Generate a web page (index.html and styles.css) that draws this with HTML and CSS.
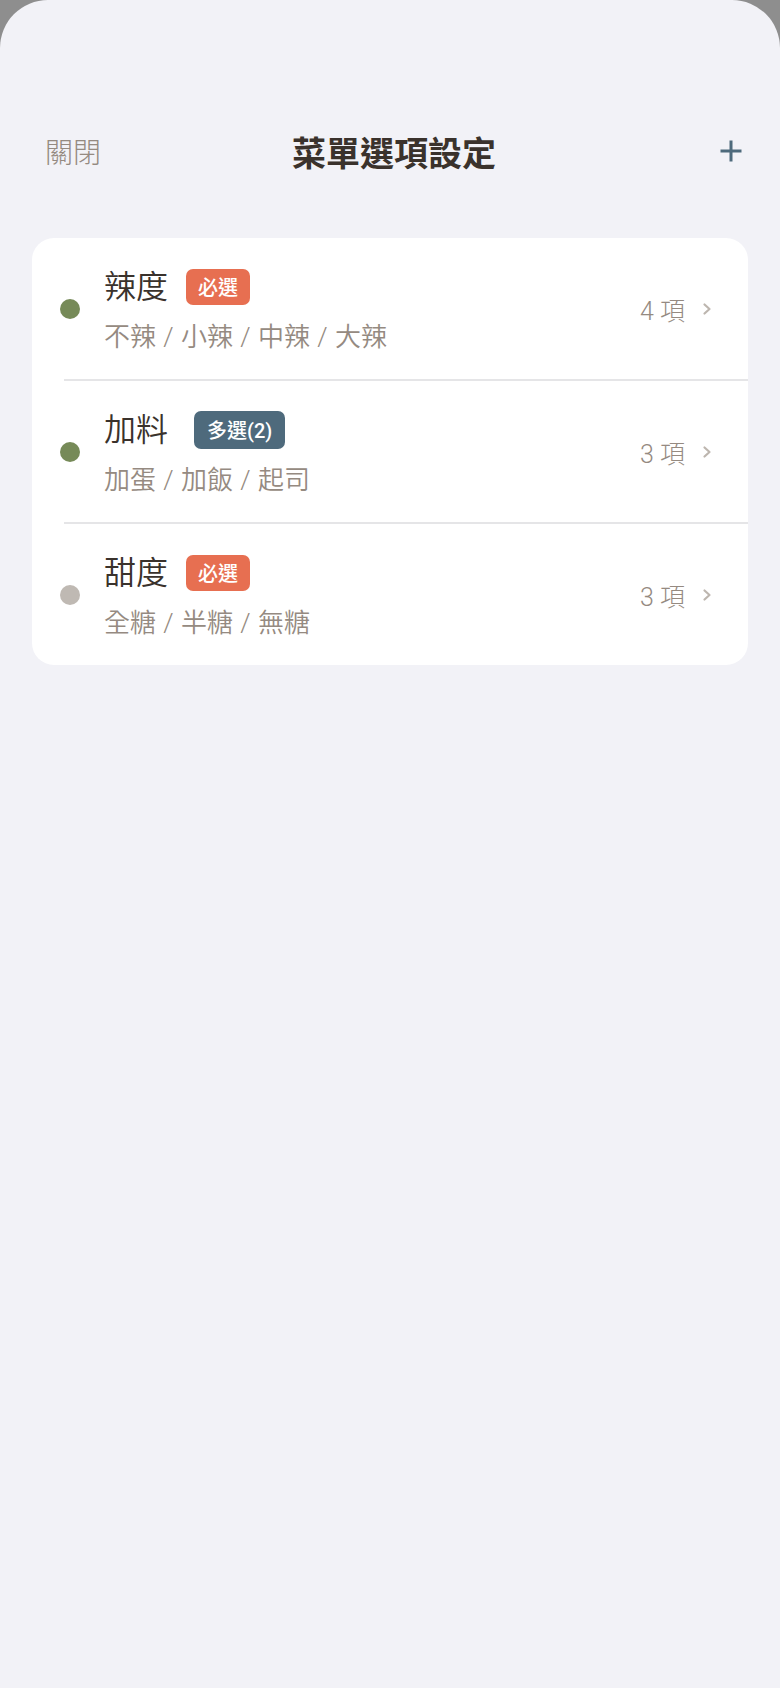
FILE: index.html
```html
<!DOCTYPE html>
<html lang="zh-Hant">
<head>
<meta charset="utf-8">
<title>菜單選項設定</title>
<link rel="stylesheet" href="styles.css">
</head>
<body>
<div class="screen">
  <header class="header">
    <span class="close">關閉</span>
    <h1 class="title">菜單選項設定</h1>
    <span class="add">
      <svg width="24" height="24" viewBox="0 0 24 24"><path d="M12 1.5V22.5M1.5 12H22.5" stroke="#4e6a7c" stroke-width="3" fill="none"/></svg>
    </span>
  </header>

  <section class="card">
    <div class="row">
      <span class="dot dot-on"></span>
      <div class="info">
        <div class="line">
          <span class="name">辣度</span>
          <span class="badge badge-req">必選</span>
        </div>
        <div class="sub">不辣 / 小辣 / 中辣 / 大辣</div>
      </div>
      <span class="count">4 項</span>
      <svg class="chev" width="12" height="14" viewBox="0 0 12 14"><path d="M3.5 2.5L8.5 7L3.5 11.5" stroke="#bdb6af" stroke-width="2.2" fill="none" stroke-linecap="round" stroke-linejoin="round"/></svg>
    </div>
    <div class="sep"></div>
    <div class="row">
      <span class="dot dot-on"></span>
      <div class="info">
        <div class="line">
          <span class="name">加料</span>
          <span class="badge badge-multi">多選(2)</span>
        </div>
        <div class="sub">加蛋 / 加飯 / 起司</div>
      </div>
      <span class="count">3 項</span>
      <svg class="chev" width="12" height="14" viewBox="0 0 12 14"><path d="M3.5 2.5L8.5 7L3.5 11.5" stroke="#bdb6af" stroke-width="2.2" fill="none" stroke-linecap="round" stroke-linejoin="round"/></svg>
    </div>
    <div class="sep"></div>
    <div class="row">
      <span class="dot dot-off"></span>
      <div class="info">
        <div class="line">
          <span class="name">甜度</span>
          <span class="badge badge-req">必選</span>
        </div>
        <div class="sub">全糖 / 半糖 / 無糖</div>
      </div>
      <span class="count">3 項</span>
      <svg class="chev" width="12" height="14" viewBox="0 0 12 14"><path d="M3.5 2.5L8.5 7L3.5 11.5" stroke="#bdb6af" stroke-width="2.2" fill="none" stroke-linecap="round" stroke-linejoin="round"/></svg>
    </div>
  </section>
</div>
</body>
</html>
```

FILE: styles.css
```css
* { box-sizing: border-box; }

html, body {
  margin: 0;
  padding: 0;
}

body {
  background: #8e8e8e;
  font-family: Roboto, "Noto Sans CJK TC", "Noto Sans", sans-serif;
}

.screen {
  min-height: 1688px;
  background: #f2f2f7;
  border-radius: 48px 48px 0 0;
  padding-top: 121px;
}

.header {
  display: grid;
  grid-template-columns: 1fr auto 1fr;
  align-items: center;
  height: 60px;
  padding: 0 37px 0 45px;
}

.close {
  font-size: 28px;
  font-weight: 300;
  color: #958a81;
  justify-self: start;
}

.title {
  margin: 0;
  font-size: 34px;
  font-weight: 700;
  color: #3a322c;
}

.add {
  justify-self: end;
  display: flex;
}

.card {
  margin: 57px 32px 0;
  background: #ffffff;
  border-radius: 22px;
  overflow: hidden;
}

.row {
  display: flex;
  align-items: center;
  height: 141px;
  padding: 0 35px 0 28px;
}

.sep {
  height: 2px;
  margin-left: 32px;
  background: #e5e5e7;
}

.dot {
  width: 20px;
  height: 20px;
  border-radius: 50%;
  flex: none;
}

.dot-on { background: #768a58; }
.dot-off { background: #bfb9b3; }

.info {
  flex: 1;
  margin-left: 24px;
  display: flex;
  flex-direction: column;
  gap: 10px;
}

.line {
  display: flex;
  align-items: center;
  height: 46px;
  gap: 18px;
}

.name {
  font-size: 32px;
  font-weight: 350;
  color: #3a322c;
  line-height: 46px;
}

.badge {
  display: inline-flex;
  align-items: center;
  height: 36px;
  padding: 0 12px;
  border-radius: 7px;
  color: #ffffff;
  font-size: 20px;
  font-weight: 500;
}

.badge-req { background: #e76f51; }
.badge-multi { background: #4e6a7c; height: 38px; padding: 0 13px; margin-left: 8px; }

.sub {
  font-size: 26px;
  font-weight: 350;
  line-height: 34px;
  color: #958a81;
  word-spacing: 1px;
}

.count {
  font-size: 25px;
  font-weight: 300;
  color: #958a81;
  margin-right: 16px;
}

.chev { flex: none; }
```
